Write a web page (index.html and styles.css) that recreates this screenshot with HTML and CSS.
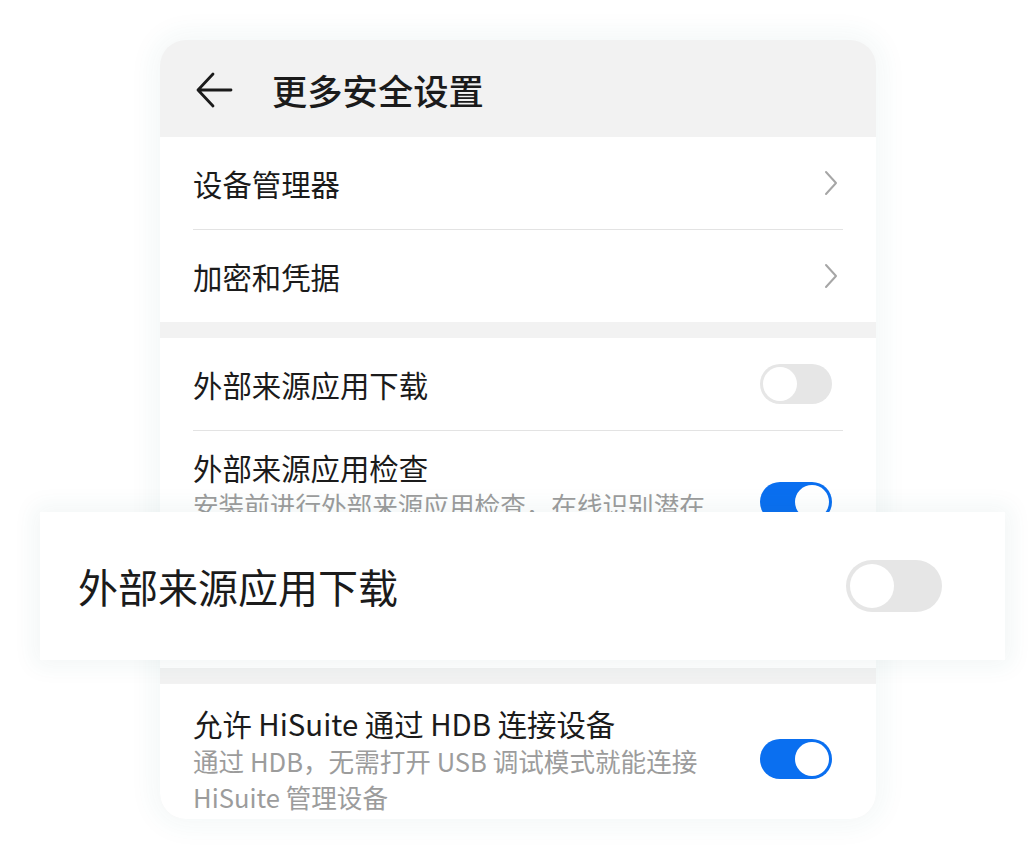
FILE: index.html
```html
<!DOCTYPE html>
<html lang="zh-CN">
<head>
<meta charset="utf-8">
<title>更多安全设置</title>
<link rel="stylesheet" href="styles.css">
</head>
<body>
<div class="stage">
  <div class="panel">
    <div class="header">
      <svg class="back" viewBox="0 0 40 40" width="40" height="40" aria-hidden="true">
        <path d="M19 4 L4 20 L19 36 M4 20 H37" fill="none" stroke="#1b1b1b" stroke-width="2.8" stroke-linecap="round" stroke-linejoin="round"/>
      </svg>
      <span class="title">更多安全设置</span>
    </div>

    <div class="group">
      <div class="row nav">
        <span class="label">设备管理器</span>
        <svg class="chev" viewBox="0 0 16 28" width="16" height="28" aria-hidden="true"><path d="M3 3 L13 14 L3 25" fill="none" stroke="#a6a6a6" stroke-width="2" stroke-linecap="round" stroke-linejoin="round"/></svg>
      </div>
      <div class="divider"></div>
      <div class="row nav">
        <span class="label">加密和凭据</span>
        <svg class="chev" viewBox="0 0 16 28" width="16" height="28" aria-hidden="true"><path d="M3 3 L13 14 L3 25" fill="none" stroke="#a6a6a6" stroke-width="2" stroke-linecap="round" stroke-linejoin="round"/></svg>
      </div>
    </div>

    <div class="gap"></div>

    <div class="group g2">
      <div class="row nav">
        <span class="label">外部来源应用下载</span>
        <span class="switch"><span class="knob"></span></span>
      </div>
      <div class="divider"></div>
      <div class="row rich tall">
        <div class="texts">
          <div class="label">外部来源应用检查</div>
          <div class="sub">安装前进行外部来源应用检查，在线识别潜在风险应用，保障设备安全</div>
        </div>
        <span class="switch on"><span class="knob"></span></span>
      </div>
    </div>

    <div class="gap"></div>

    <div class="group">
      <div class="row rich last">
        <div class="texts">
          <div class="label">允许 HiSuite 通过 HDB 连接设备</div>
          <div class="sub">通过 HDB，无需打开 USB 调试模式就能连接 HiSuite 管理设备</div>
        </div>
        <span class="switch on mid"><span class="knob"></span></span>
      </div>
    </div>
  </div>

  <div class="zoomcard">
    <span class="zlabel">外部来源应用下载</span>
    <span class="switch big"><span class="knob"></span></span>
  </div>
</div>
</body>
</html>
```

FILE: styles.css
```css
* { box-sizing: border-box; }
html, body {
  margin: 0;
  padding: 0;
  background: #ffffff;
}
body {
  font-family: "Noto Sans CJK SC", "Noto Sans", sans-serif;
  color: #1b1b1b;
}
.stage {
  position: relative;
  width: 1036px;
  height: 846px;
  overflow: hidden;
  padding-top: 40px;
  padding-left: 160px;
}
.panel {
  width: 716px;
  border-radius: 26px;
  overflow: hidden;
  background: #f2f2f2;
  box-shadow: 0 0 26px 8px rgba(40, 110, 110, 0.05);
}
.header {
  height: 97px;
  display: flex;
  align-items: center;
  padding-left: 34px;
  padding-top: 2px;
}
.back { margin-right: 38px; }
.title {
  font-size: 35.3px;
  font-weight: 500;
  line-height: 40px;
}
.group {
  background: #ffffff;
  padding: 0 33px;
}
.gap { height: 16px; }
.row {
  display: flex;
  align-items: center;
  justify-content: space-between;
}
.nav { height: 92px; }
.label {
  font-size: 29.4px;
  line-height: 40px;
  font-weight: 400;
  color: #1b1b1b;
}
.chev { margin-right: 4px; }
.divider {
  height: 1px;
  background: #e3e3e3;
}
.rich {
  align-items: flex-start;
  padding-top: 16px;
}
.tall { height: 237px; }
.rich.last { padding-top: 19px; padding-bottom: 4px; }
.texts { width: 522px; }
.sub {
  font-size: 25.6px;
  line-height: 36px;
  color: #9c9c9c;
}
.switch {
  position: relative;
  flex: none;
  width: 72px;
  height: 40px;
  border-radius: 20px;
  background: #e6e6e6;
  margin-right: 11px;
}
.switch .knob {
  position: absolute;
  left: 3px;
  top: 3px;
  width: 34px;
  height: 34px;
  border-radius: 50%;
  background: #ffffff;
}
.switch.on { background: #0a6ff0; margin-top: 35px; }
.switch.on .knob { left: auto; right: 3px; }
.switch.mid { margin-top: 36px; }
.zoomcard {
  position: absolute;
  left: 40px;
  top: 512px;
  width: 965px;
  height: 148px;
  background: #ffffff;
  display: flex;
  align-items: center;
  justify-content: space-between;
  padding: 0 63px 0 38px;
  box-shadow: 0 0 22px 6px rgba(40, 110, 110, 0.06);
}
.zlabel {
  font-size: 40px;
  line-height: 52px;
  color: #1b1b1b;
}
.switch.big {
  width: 96px;
  height: 52px;
  border-radius: 26px;
  margin: 0;
}
.switch.big .knob {
  left: 4px;
  top: 4px;
  width: 44px;
  height: 44px;
}
```
